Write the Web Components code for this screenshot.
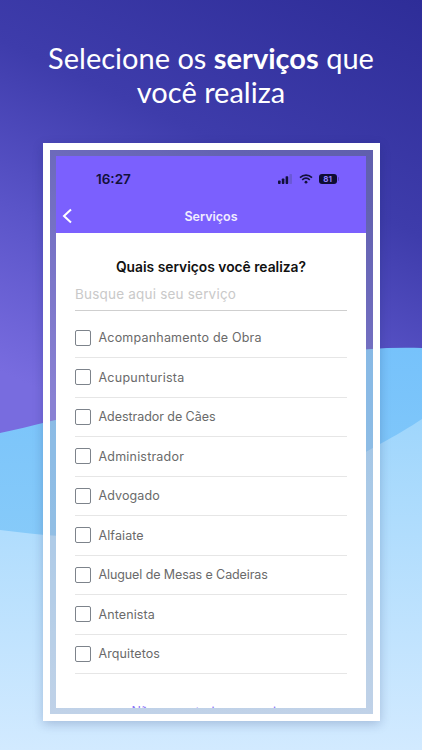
<!DOCTYPE html>
<html><head><meta charset="utf-8"><style>
html,body{margin:0;padding:0;width:422px;height:750px;overflow:hidden}
promo-page b{font-weight:700}
</style></head><body>
<promo-page>
  <span slot="title">Selecione os <b>serviços</b> que<br>você realiza</span>
  <phone-frame>
    <status-bar slot="status" time="16:27" battery="81"></status-bar>
    <nav-bar slot="nav" title="Serviços"></nav-bar>
    <service-list heading="Quais serviços você realiza?" placeholder="Busque aqui seu serviço" link="Não encontrei meu serviço">
      <service-row style="letter-spacing:.2px">Acompanhamento de Obra</service-row>
      <service-row style="letter-spacing:.25px">Acupunturista</service-row>
      <service-row style="letter-spacing:-.05px">Adestrador de Cães</service-row>
      <service-row style="letter-spacing:.2px">Administrador</service-row>
      <service-row style="letter-spacing:.1px">Advogado</service-row>
      <service-row style="letter-spacing:.1px">Alfaiate</service-row>
      <service-row style="letter-spacing:-.1px">Aluguel de Mesas e Cadeiras</service-row>
      <service-row style="letter-spacing:.1px">Antenista</service-row>
      <service-row style="letter-spacing:.1px">Arquitetos</service-row>
    </service-list>
  </phone-frame>
</promo-page>
<script>
function def(name, html){
  customElements.define(name, class extends HTMLElement{
    connectedCallback(){
      if(this.shadowRoot) return;
      const r=this.attachShadow({mode:'open'});
      r.innerHTML=typeof html==='function'?html(this):html;
    }
  });
}
def('promo-page',`<style>
:host{display:block;position:relative;width:422px;height:750px;overflow:hidden;background:linear-gradient(205deg,#2e2d98 0%,#3e3cab 25%,#5a54c8 42%,#786cdf 60%);}
svg{position:absolute;left:0;top:0}
.c{position:relative;display:flex;flex-direction:column;align-items:center}
h1{margin:0;box-sizing:border-box;padding-top:41px;height:143px;font:400 29px/34px "Lato","Open Sans",sans-serif;color:#fff;text-align:center}
::slotted(*){display:block}
</style>
<svg width="422" height="750" viewBox="0 0 422 750"><defs>
<linearGradient id="a" x1="0" y1="0" x2="0" y2="1"><stop offset="0" stop-color="#76c2fb"/><stop offset="1" stop-color="#88cbf9"/></linearGradient>
<linearGradient id="b" x1="0" y1="0" x2="0" y2="1"><stop offset="0" stop-color="#9fd6fc"/><stop offset="1" stop-color="#d2eaff"/></linearGradient></defs>
<path d="M0 433C60 420 150 396 240 372C300 356 360 346 422 348V560H0Z" fill="url(#a)"/>
<path d="M0 530C20 532 40 535 60 536C170 540 300 490 380 444C395 436 410 427 422 419V750H0Z" fill="url(#b)"/>
</svg>
<div class="c"><h1><slot name="title"></slot></h1><slot></slot></div>`);
def('phone-frame',`<style>
:host{display:block;box-sizing:border-box;width:337px;height:578px;border:7px solid #fff;padding:6px 6.5px;background:rgba(170,170,190,.35);background-clip:padding-box;box-shadow:0 3px 10px rgba(20,30,90,.22)}
.s{height:552px;overflow:hidden;background:#7b60fe;display:flex;flex-direction:column}
</style><div class="s"><slot name="status"></slot><slot name="nav"></slot><slot></slot></div>`);
def('status-bar',h=>`<style>
:host{display:flex;align-items:center;justify-content:space-between;height:47px;padding:0 27px 2px 40px;box-sizing:border-box;font:600 13.5px "Inter","Liberation Sans",sans-serif;color:#12103a;flex:none}
.i{display:flex;align-items:center;gap:6px}
.bat{display:flex;align-items:center}
.b{width:18px;height:10px;border-radius:3px;background:#0f0d33;color:#8f7fff;font:700 8px/10px "Inter",sans-serif;text-align:center}
.n{width:1.5px;height:4px;background:#5a47b8;border-radius:0 2px 2px 0;margin-left:1px}
</style><span>${h.getAttribute('time')}</span><div class="i">
<svg width="15" height="10" viewBox="0 0 15 10"><g fill="#12103a"><rect x="0" y="6.5" width="2.6" height="3.5" rx=".7"/><rect x="3.8" y="4.5" width="2.6" height="5.5" rx=".7"/><rect x="7.6" y="2.3" width="2.6" height="7.7" rx=".7"/></g><rect x="11.4" y="0" width="2.6" height="10" rx=".7" fill="#6a58d6"/></svg>
<svg width="14" height="10" viewBox="0 0 14 10" fill="none" stroke="#12103a" stroke-width="1.7"><path d="M1 3.6C4.5.4 9.5.4 13 3.6"/><path d="M3.2 5.8C5.4 3.9 8.6 3.9 10.8 5.8"/><circle cx="7" cy="8.2" r="1.4" fill="#12103a" stroke="none"/></svg>
<div class="bat"><div class="b">${h.getAttribute('battery')}</div><div class="n"></div></div>
</div>`);
def('nav-bar',h=>`<style>
:host{display:flex;align-items:center;justify-content:center;position:relative;height:30px;flex:none;font:600 12.5px "Inter","Liberation Sans",sans-serif;color:#f1edff}
svg{position:absolute;left:5px;top:5px}
span{position:relative;top:-2px}
</style><svg width="11" height="16" viewBox="0 0 11 16" fill="none" stroke="#fff" stroke-width="2"><path d="M10 1.5 3 8 10 14.5"/></svg><span>${h.getAttribute('title')}</span>`);
def('service-list',h=>`<style>
:host{display:block;flex:1;background:#fff;padding:25px 19px 0;font-family:"Inter","Liberation Sans",sans-serif;overflow:hidden}
h2{margin:0;font:600 13.8px/18px "Inter",sans-serif;color:#111;text-align:center}
.q{margin-top:8px;height:26px;line-height:20px;border-bottom:1.5px solid #cfcfcf;font-size:13.5px;color:#c9c9c9;letter-spacing:.2px}
.r{padding-top:7.5px;display:block}
.l{margin-top:30px;text-align:center;font-size:12.5px;color:#8a72fb}
</style><h2>${h.getAttribute('heading')}</h2><div class="q">${h.getAttribute('placeholder')}</div><div class="r"><slot></slot></div><div class="l">${h.getAttribute('link')}</div>`);
def('service-row',`<style>
:host{display:flex;align-items:center;gap:7.5px;box-sizing:border-box;height:39.5px;border-bottom:1px solid #e6e6e6;font-size:12.5px;color:#6a6a6a}
i{box-sizing:border-box;width:16px;height:16px;border:1.5px solid #7d838b;border-radius:2px;flex:none}
</style><i></i><slot></slot>`);
</script>
</body></html>
